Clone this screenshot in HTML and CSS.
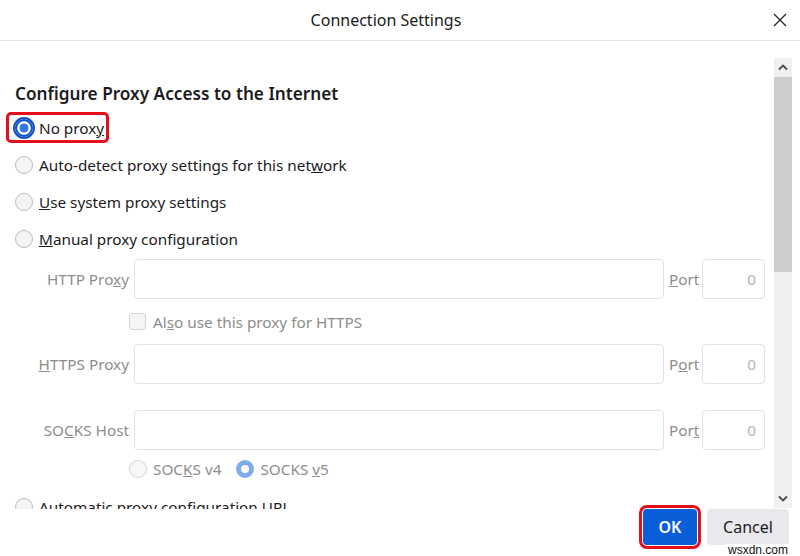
FILE: index.html
```html
<!DOCTYPE html>
<html lang="en">
<head>
<meta charset="utf-8">
<title>Connection Settings</title>
<link rel="stylesheet" href="styles.css">
</head>
<body>
<div class="dialog">
  <header class="titlebar">
    <div class="title">Connection Settings</div>
    <div class="close">
      <svg width="16" height="16" viewBox="0 0 16 16"><path d="M2 2 L14 14 M14 2 L2 14" stroke="#2b2b2b" stroke-width="1.4" fill="none"/></svg>
    </div>
  </header>
  <div class="body">
    <div class="content">
      <h1 class="heading">Configure Proxy Access to the Internet</h1>
      <div class="opt"><span class="hl"><span class="radio checked"></span><span>No prox<u>y</u></span></span></div>
      <div class="opt"><span class="radio"></span><span>Auto-detect proxy settings for this net<u>w</u>ork</span></div>
      <div class="opt"><span class="radio"></span><span><u>U</u>se system proxy settings</span></div>
      <div class="opt"><span class="radio"></span><span><u>M</u>anual proxy configuration</span></div>
      <div class="manual">
        <div class="field-row">
          <span class="flabel">HTTP Pro<u>x</u>y</span>
          <div class="input"></div>
          <span class="plabel"><u>P</u>ort</span>
          <div class="input port">0</div>
        </div>
        <div class="check-row">
          <span class="checkbox"></span><span class="dis">Al<u>s</u>o use this proxy for HTTPS</span>
        </div>
        <div class="field-row">
          <span class="flabel"><u>H</u>TTPS Proxy</span>
          <div class="input"></div>
          <span class="plabel">P<u>o</u>rt</span>
          <div class="input port">0</div>
        </div>
        <div class="field-row socks">
          <span class="flabel">SO<u>C</u>KS Host</span>
          <div class="input"></div>
          <span class="plabel">Por<u>t</u></span>
          <div class="input port">0</div>
        </div>
        <div class="socks-row">
          <span class="radio dis-radio"></span><span class="dis">SOC<u>K</u>S v4</span>
          <span class="radio dis-checked"></span><span class="dis">SOCKS <u>v</u>5</span>
        </div>
      </div>
      <div class="opt"><span class="radio"></span><span>Automatic proxy configuration U<u>R</u>L</span></div>
    </div>
    <div class="scrollbar">
      <div class="sb-btn">
        <svg width="10" height="7" viewBox="0 0 10 7"><path d="M1 5.5 L5 1.5 L9 5.5" stroke="#4a4a4a" stroke-width="1.8" fill="none"/></svg>
      </div>
      <div class="thumb"></div>
      <div class="track"></div>
      <div class="sb-btn">
        <svg width="10" height="7" viewBox="0 0 10 7"><path d="M1 1.5 L5 5.5 L9 1.5" stroke="#4a4a4a" stroke-width="1.8" fill="none"/></svg>
      </div>
    </div>
  </div>
  <footer class="footer">
    <button class="btn ok">OK</button>
    <button class="btn cancel">Cancel</button>
  </footer>
  <div class="watermark">wsxdn.com</div>
</div>
</body>
</html>
```
FILE: styles.css
```css
html, body {
  margin: 0;
  padding: 0;
  background: #ffffff;
}
body {
  font-family: "Noto Sans", "Open Sans", sans-serif;
  color: #1c1b22;
  font-size: 15.3px;
}
.dialog {
  position: relative;
  width: 800px;
  height: 556px;
  overflow: hidden;
  background: #fff;
}
.titlebar {
  display: flex;
  align-items: center;
  height: 40px;
  border-bottom: 1px solid #e4e4e4;
}
.title {
  flex: 1;
  text-align: center;
  font-size: 16px;
  color: #1c1b22;
}
.close {
  width: 28px;
  display: flex;
  align-items: center;
  justify-content: flex-start;
}
.body {
  display: flex;
  height: 468px;
}
.content {
  flex: 1;
  overflow: hidden;
  padding: 41px 0 0 15px;
}
.heading {
  margin: 0 0 3px 0;
  font-size: 17.2px;
  font-weight: 600;
  line-height: 24px;
  height: 24px;
}
.opt {
  display: flex;
  align-items: center;
  height: 37px;
}
.opt > span:last-child, .hl > span:last-child {
  white-space: nowrap;
}
.hl {
  position: relative;
  display: flex;
  align-items: center;
  height: 100%;
}
.hl::after {
  content: "";
  position: absolute;
  left: -9px;
  right: -5px;
  top: 3px;
  bottom: 3px;
  border: 3px solid #e3101b;
  border-radius: 5px;
}
.radio {
  flex: none;
  display: inline-block;
  width: 18px;
  height: 18px;
  box-sizing: border-box;
  border-radius: 50%;
  border: 1px solid #bdbdbd;
  background: #f4f4f4;
  margin-right: 6px;
}
.radio.checked {
  border: 2px solid #1553c7;
  background: #2d78e6;
  box-shadow: inset 0 0 0 2.5px #ffffff;
  outline: 2.5px solid #1553c7;
  outline-offset: 0.5px;
}
.manual {
  margin-top: 2px;
}
.field-row {
  display: grid;
  grid-template-columns: 114px 530px 28px 63px;
  column-gap: 5px;
  align-items: center;
  height: 40px;
  color: #8d8d8d;
}
.field-row.socks {
  margin-top: 26px;
}
.flabel {
  text-align: right;
  white-space: nowrap;
}
.plabel {
  white-space: nowrap;
}
.input {
  box-sizing: border-box;
  height: 40px;
  border: 1px solid #e2e2e2;
  border-radius: 4px;
  background: #fff;
}
.input.port {
  display: flex;
  align-items: center;
  justify-content: flex-end;
  padding-right: 8px;
  color: #b3b3b3;
}
.check-row {
  display: flex;
  align-items: center;
  height: 45px;
  padding-left: 114px;
}
.checkbox {
  width: 17px;
  height: 17px;
  box-sizing: border-box;
  border: 1px solid #d4d4d4;
  border-radius: 3px;
  background: #f6f6f6;
  margin-right: 7px;
}
.dis {
  color: #8d8d8d;
  white-space: nowrap;
}
.socks-row {
  display: flex;
  align-items: center;
  height: 38px;
  padding-left: 114px;
}
.dis-radio {
  border-color: #d4d4d4;
  background: #f7f7f7;
}
.dis-checked {
  background: #fff;
  border: 5px solid #80aaee;
  margin-left: 15px;
}
.scrollbar {
  width: 18px;
  margin: 17px 8px 1px 0;
  display: flex;
  flex-direction: column;
  background: #f0f0f0;
}
.sb-btn {
  height: 19px;
  display: flex;
  align-items: center;
  justify-content: center;
  background: #f0f0f0;
}
.thumb {
  height: 195px;
  background: #cdcdcd;
}
.track {
  flex: 1;
}
.footer {
  display: flex;
  justify-content: flex-end;
  align-items: flex-start;
  gap: 10px;
  padding-right: 11px;
  height: 47px;
}
.btn {
  font-family: "Noto Sans", "Open Sans", sans-serif;
  height: 36px;
  border: none;
  border-radius: 4px;
  font-size: 16px;
  padding: 0;
}
.ok {
  width: 54px;
  background: #0a5fd9;
  color: #fff;
  font-weight: 600;
  outline: 3px solid #e3101b;
  outline-offset: 1px;
}
.cancel {
  width: 82px;
  background: #e9e9ed;
  color: #1c1b22;
}
.watermark {
  position: absolute;
  right: 10px;
  bottom: 0;
  font-family: "Liberation Sans", sans-serif;
  font-size: 12px;
  line-height: 12px;
  background: #fff;
  color: #111;
  padding: 0 2px;
}
```
